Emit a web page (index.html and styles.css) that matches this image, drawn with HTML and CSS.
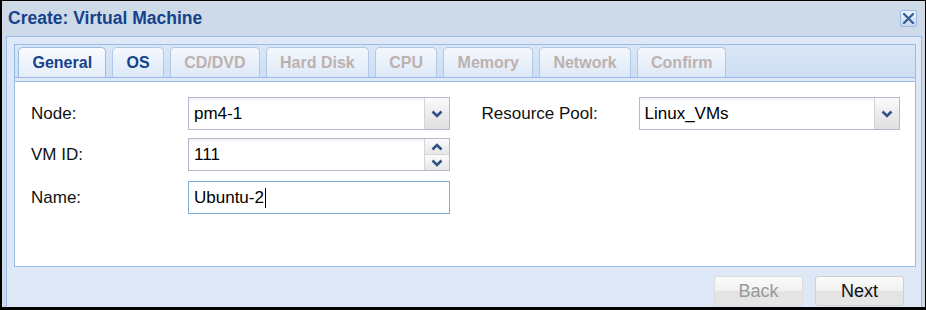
FILE: index.html
```html
<!DOCTYPE html>
<html>
<head>
<meta charset="utf-8">
<link rel="stylesheet" href="styles.css">
</head>
<body>
<div class="win">
  <div class="win-head">
    <span class="win-title">Create: Virtual Machine</span>
    <span class="win-close">
      <svg width="13" height="13" viewBox="0 0 13 13"><path d="M2 2 L11 11 M11 2 L2 11" stroke="#3a5f95" stroke-width="2.4" stroke-linecap="round" fill="none"/></svg>
    </span>
  </div>
  <div class="win-frame">
    <div class="tabpanel">
      <div class="tab-strip">
        <div class="tab active">General</div>
        <div class="tab">OS</div>
        <div class="tab disabled">CD/DVD</div>
        <div class="tab disabled">Hard Disk</div>
        <div class="tab disabled">CPU</div>
        <div class="tab disabled">Memory</div>
        <div class="tab disabled">Network</div>
        <div class="tab disabled">Confirm</div>
      </div>
      <div class="tab-spacer"></div>
      <div class="tab-body">
        <div class="col">
          <div class="row">
            <label class="lbl">Node:</label>
            <div class="field">
              <span class="val">pm4-1</span>
              <span class="trigger">
                <svg width="12" height="8" viewBox="0 0 12 8"><path d="M1.5 1.5 L6 6 L10.5 1.5" stroke="#2f5188" stroke-width="2.6" fill="none"/></svg>
              </span>
            </div>
          </div>
          <div class="row">
            <label class="lbl">VM ID:</label>
            <div class="field">
              <span class="val">111</span>
              <span class="trigger spin">
                <span class="half"><svg width="12" height="8" viewBox="0 0 12 8"><path d="M1.5 6.5 L6 2 L10.5 6.5" stroke="#2f5188" stroke-width="2.6" fill="none"/></svg></span>
                <span class="half"><svg width="12" height="8" viewBox="0 0 12 8"><path d="M1.5 1.5 L6 6 L10.5 1.5" stroke="#2f5188" stroke-width="2.6" fill="none"/></svg></span>
              </span>
            </div>
          </div>
          <div class="row row-name">
            <label class="lbl">Name:</label>
            <div class="field focus">
              <span class="val">Ubuntu-2<span class="caret"></span></span>
            </div>
          </div>
        </div>
        <div class="col">
          <div class="row">
            <label class="lbl">Resource Pool:</label>
            <div class="field">
              <span class="val">Linux_VMs</span>
              <span class="trigger">
                <svg width="12" height="8" viewBox="0 0 12 8"><path d="M1.5 1.5 L6 6 L10.5 1.5" stroke="#2f5188" stroke-width="2.6" fill="none"/></svg>
              </span>
            </div>
          </div>
        </div>
      </div>
    </div>
    <div class="win-foot">
      <button class="btn" disabled>Back</button>
      <button class="btn">Next</button>
    </div>
  </div>
</div>
</body>
</html>
```
FILE: styles.css
```css
html, body {
  margin: 0;
  padding: 0;
  background: #000;
}
.win {
  width: 926px;
  height: 310px;
  box-sizing: border-box;
  border-top: 1px solid #000;
  border-left: 2px solid #000;
  border-right: 1px solid #000;
  border-bottom: 3px solid #000;
  background: #cedae8;
  display: flex;
  flex-direction: column;
  font-family: "Liberation Sans", Arial, sans-serif;
}
.win-head {
  height: 35px;
  display: flex;
  align-items: center;
  justify-content: space-between;
  padding: 0 7px 0 6px;
  flex: none;
}
.win-title {
  font-weight: bold;
  font-size: 17.5px;
  color: #15428b;
  margin-top: -1px;
}
.win-close {
  width: 17px;
  height: 17px;
  box-sizing: border-box;
  border: 1px solid #99bbe8;
  border-radius: 2px;
  background: linear-gradient(#eef3fb, #c9d8ee);
  display: flex;
  align-items: center;
  justify-content: center;
  margin-top: -1px;
  margin-right: 1px;
}
.win-frame {
  flex: 1;
  margin: 0 3px 0 4px;
  border: 1px solid #99bbe8;
  border-bottom: none;
  background: #dfe8f6;
  padding: 7px 5px 0 7px;
  display: flex;
  flex-direction: column;
}
.tabpanel {
  border: 1px solid #99bbe8;
  display: flex;
  flex-direction: column;
  height: 223px;
  box-sizing: border-box;
  flex: none;
}
.tab-strip {
  height: 33px;
  box-sizing: border-box;
  padding: 3px 0 0 3px;
  background: linear-gradient(#dae6f5, #cddff4);
  border-bottom: 1px solid #99bbe8;
  display: flex;
  align-items: flex-end;
  gap: 6px;
}
.tab {
  height: 30px;
  box-sizing: border-box;
  padding: 6px 13px 0 13.5px;
  border: 1px solid #b0c9e8;
  border-bottom: none;
  border-radius: 5px 5px 0 0;
  background: linear-gradient(#f4f8fd, #dde9f8);
  font-weight: bold;
  font-size: 16px;
  color: #15428b;
}
.tab.active {
  background: linear-gradient(#f9fbfe, #e4edf9);
  border-color: #99bbe8;
}
.tab.disabled {
  color: #bdb1af;
}
.tab-spacer {
  height: 3px;
  background: #dfe8f6;
  border-bottom: 1px solid #99bbe8;
}
.tab-body {
  flex: 1;
  background: #fff;
  padding: 15px 15px 0 16px;
  display: flex;
  gap: 32px;
}
.col {
  flex: 1;
  display: flex;
  flex-direction: column;
  gap: 8px;
}
.row {
  display: flex;
  align-items: center;
  height: 33px;
}
.row-name {
  margin-top: 2px;
}
.lbl {
  width: 157px;
  flex: none;
  font-size: 17px;
  color: #111;
}
.field {
  flex: 1;
  height: 33px;
  box-sizing: border-box;
  border: 1px solid #b5b8c8;
  background: linear-gradient(#f1f1f1, #fff 4px);
  display: flex;
  align-items: center;
  position: relative;
}
.field.focus {
  border-color: #7eadd9;
  background: #fff;
}
.val {
  flex: 1;
  padding-left: 5px;
  font-size: 17px;
  color: #000;
  display: flex;
  align-items: center;
}
.caret {
  display: inline-block;
  width: 1px;
  height: 20px;
  background: #000;
  margin-left: 1px;
}
.trigger {
  width: 25px;
  height: 31px;
  flex: none;
  box-sizing: border-box;
  border-left: 1px solid #d4d4d4;
  background: linear-gradient(#fbfbfb, #ececec 50%, #e0e0e0);
  display: flex;
  align-items: center;
  justify-content: center;
}
.trigger.spin {
  flex-direction: column;
  background: none;
}
.half {
  flex: 1;
  width: 100%;
  display: flex;
  align-items: center;
  justify-content: center;
  background: linear-gradient(#fbfbfb, #e6e6e6);
}
.half + .half {
  border-top: 1px solid #d8d8d8;
}
.win-foot {
  flex: 1;
  display: flex;
  justify-content: flex-end;
  align-items: flex-start;
  gap: 12px;
  padding: 9px 12px 0 0;
}
.btn {
  width: 89px;
  height: 30px;
  box-sizing: border-box;
  border: 1px solid #d0d0d0;
  border-radius: 3px;
  background: linear-gradient(#fbfbfb 0%, #f1f1f1 48%, #e3e3e3 52%, #e6e6e6 100%);
  font-family: "Liberation Sans Narrow", "Liberation Sans", sans-serif;
  font-size: 18px;
  color: #111;
  padding: 0;
}
.btn:disabled {
  color: #999;
  border-color: #dcdcdc;
}
```
